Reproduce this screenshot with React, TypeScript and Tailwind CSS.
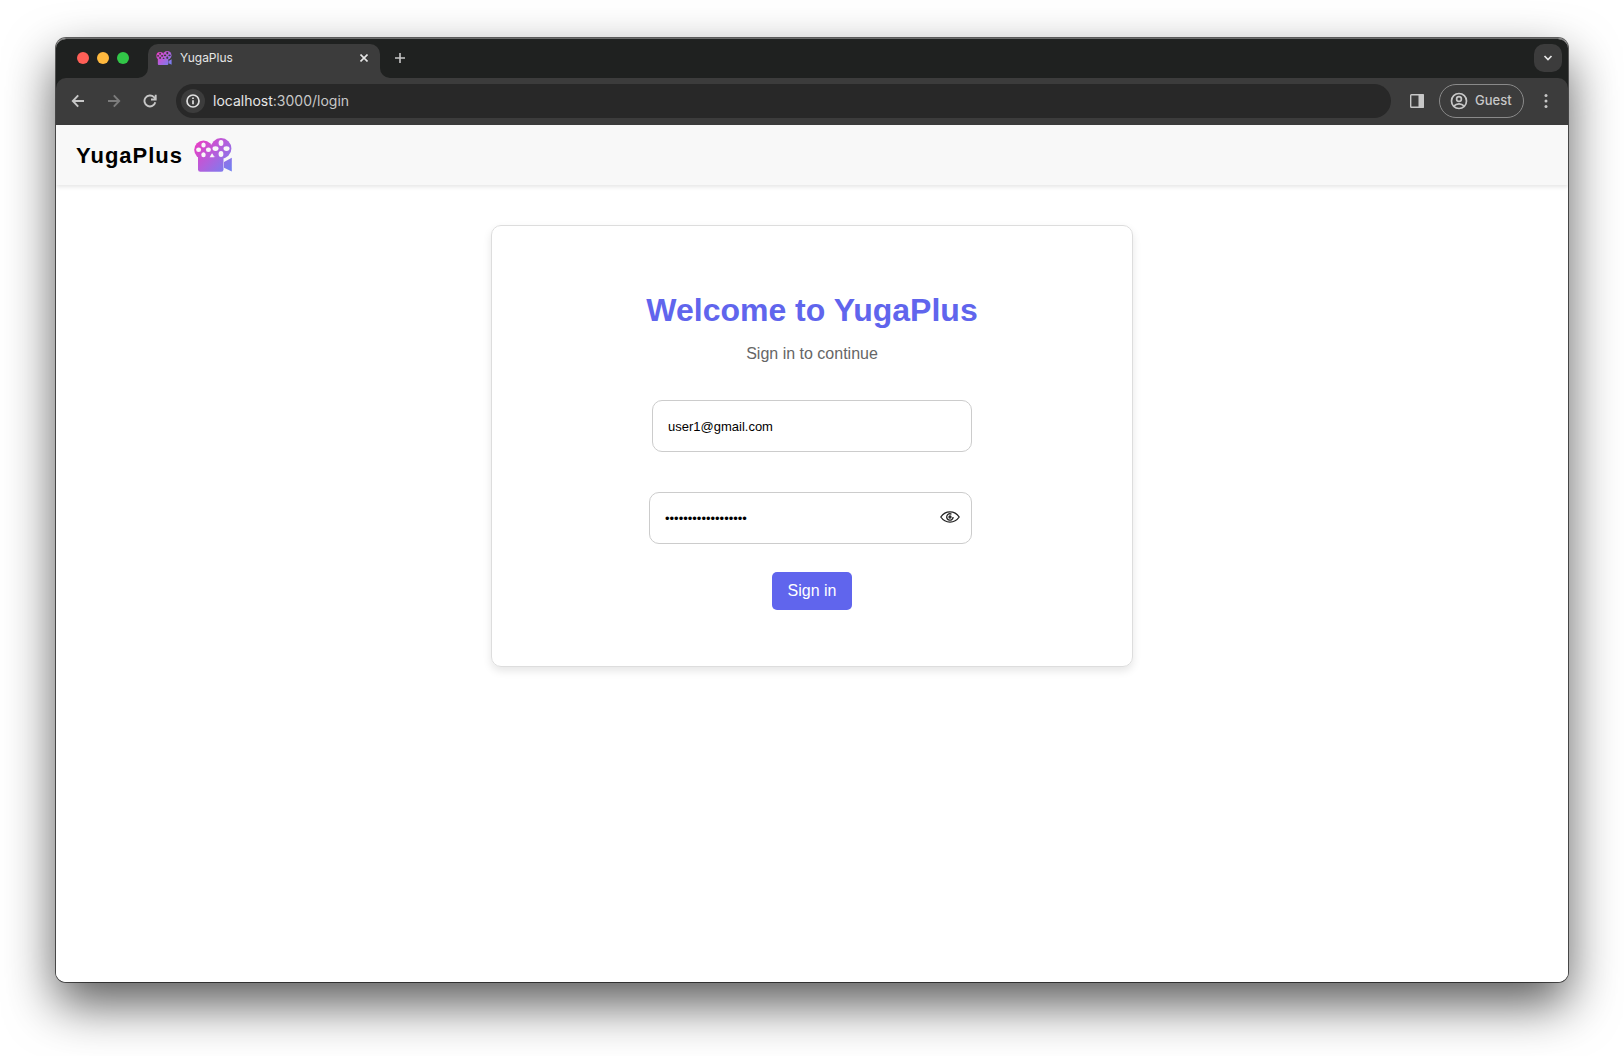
import { useId } from "react";

const reelHoles = (cx: number, cy: number, d: number, rx: number, ry: number) => (
  <>
    <ellipse cx={cx} cy={cy - d} rx={rx} ry={ry} />
    <ellipse cx={cx} cy={cy + d} rx={rx} ry={ry} />
    <ellipse cx={cx - d} cy={cy} rx={ry} ry={rx} />
    <ellipse cx={cx + d} cy={cy} rx={ry} ry={rx} />
  </>
);

function CameraLogo({ className }: { className: string }) {
  const id = useId();
  return (
    <svg viewBox="0 0 38 34" className={className} aria-hidden="true">
      <defs>
        <linearGradient id={id + "g"} gradientUnits="userSpaceOnUse" x1="4" y1="2" x2="36" y2="32">
          <stop offset="0" stopColor="#e83fc4" />
          <stop offset="0.5" stopColor="#b35fdc" />
          <stop offset="1" stopColor="#7480f0" />
        </linearGradient>
        <mask id={id + "m"}>
          <rect width="38" height="34" fill="#fff" />
          <g fill="#000">
            {reelHoles(9.5, 11.8, 4.9, 2.2, 2.5)}
            {reelHoles(27, 10.6, 5.5, 2.4, 3)}
            <path d="M18 16.3l2.4 3h-4.8z" />
          </g>
        </mask>
      </defs>
      <g fill={`url(#${id}g)`} mask={`url(#${id}m)`}>
        <circle cx="9.5" cy="11.8" r="9.3" />
        <circle cx="27" cy="10.5" r="10.4" />
        <path d="M4 18.5h25.5v13a2.3 2.3 0 0 1-2.3 2.3H6.3A2.3 2.3 0 0 1 4 31.5z" />
        <path d="M30 24l7.8-4.2v13.8L30 29.8z" />
      </g>
    </svg>
  );
}

function TabStrip() {
  return (
    <div className="flex h-[39px] items-stretch bg-[#1f2120] pr-[6px] pl-[21px]">
      <div className="flex items-center gap-2 pb-px">
        <button aria-label="Close window" className="size-3 rounded-full bg-[#ff5f57]" />
        <button aria-label="Minimize window" className="size-3 rounded-full bg-[#ffb93e]" />
        <button aria-label="Zoom window" className="size-3 rounded-full bg-[#32c748]" />
      </div>
      <div className="ml-[9px] flex items-end text-[#3c3c3c]">
        <svg viewBox="0 0 10 10" className="size-[10px] fill-current" aria-hidden="true">
          <path d="M10 0v10H0A10 10 0 0 0 10 0z" />
        </svg>
        <div className="flex h-[34px] w-[232px] items-center rounded-t-[10px] bg-[#3c3c3c] pr-[10px] pb-[7px] pl-2 text-[#e6e6e6]">
          <CameraLogo className="h-[14px] w-4" />
          <span className="ml-2 flex-1 font-[Inter] text-[12px]">YugaPlus</span>
          <button aria-label="Close tab" className="grid size-3 place-items-center">
            <svg viewBox="0 0 8 8" className="size-2" fill="none" stroke="currentColor" strokeWidth="1.6" aria-hidden="true">
              <path d="M.5.5l7 7M7.5.5l-7 7" />
            </svg>
          </button>
        </div>
        <svg viewBox="0 0 10 10" className="size-[10px] fill-current" aria-hidden="true">
          <path d="M0 0v10h10A10 10 0 0 1 0 0z" />
        </svg>
      </div>
      <button aria-label="New tab" className="ml-1 pb-px text-[#c7c7c7]">
        <svg viewBox="0 0 12 12" className="size-3" fill="none" stroke="currentColor" strokeWidth="1.6" aria-hidden="true">
          <path d="M6 1v10M1 6h10" />
        </svg>
      </button>
      <button aria-label="Search tabs" className="mt-[5px] ml-auto grid size-7 place-items-center rounded-[10px] bg-[#3c3c3c] text-[#e6e6e6]">
        <svg viewBox="0 0 10 6" className="h-[6px] w-[10px]" fill="none" stroke="currentColor" strokeWidth="1.7" aria-hidden="true">
          <path d="M1.5 1L5 4.500 8.500 1" />
        </svg>
      </button>
    </div>
  );
}

function Toolbar() {
  return (
    <div className="bg-[#1f2120]">
      <div className="flex h-[47px] items-center rounded-t-[10px] bg-[#3c3c3c] pr-5 pb-[2px] pl-[15px] font-[Inter] text-[#c7c7c7]">
        <button aria-label="Back">
          <svg viewBox="0 0 14 14" className="size-[14px]" fill="none" stroke="currentColor" strokeWidth="1.9" aria-hidden="true">
            <path d="M13 7H2M7.200 1.300L1.800 7l5.400 5.700" />
          </svg>
        </button>
        <button aria-label="Forward" disabled className="ml-[22px] text-[#7c7c7c]">
          <svg viewBox="0 0 14 14" className="size-[14px]" fill="none" stroke="currentColor" strokeWidth="1.9" aria-hidden="true">
            <path d="M1 7h11M6.800 1.300L12.200 7l-5.400 5.700" />
          </svg>
        </button>
        <button aria-label="Reload" className="ml-[22px]">
          <svg viewBox="0 0 14 14" className="size-[14px]" fill="none" stroke="currentColor" strokeWidth="1.9" aria-hidden="true">
            <path d="M12.300 8.300A5.500 5.500 0 1 1 11 3.200L12.600 5" />
            <path d="M12.700.8v4.700H8" />
          </svg>
        </button>
        <div className="ml-[19px] flex h-[34px] flex-1 items-center rounded-full bg-[#282828] pl-[5px]">
          <button aria-label="Site information" className="grid size-6 place-items-center rounded-full bg-[#3c3c3c] text-[#e0e0e0]">
            <svg viewBox="0 0 14 14" className="size-[14px]" fill="none" stroke="currentColor" strokeWidth="1.7" aria-hidden="true">
              <circle cx="7" cy="7" r="6" />
              <path d="M7 6.200v4M7 3.600v1.500" />
            </svg>
          </button>
          <a href="#login" className="ml-2 text-[14px] text-[#c7c7c7]">
            <span className="text-[#e6e6e6]">localhost</span>:3000/login
          </a>
        </div>
        <button aria-label="Side panel" className="ml-[19px]">
          <svg viewBox="0 0 14 14" className="size-[14px]" aria-hidden="true">
            <rect x=".7" y=".7" width="12.6" height="12.6" rx=".8" fill="none" stroke="currentColor" strokeWidth="1.4" />
            <path d="M8.500 0H13a1 1 0 0 1 1 1v12a1 1 0 0 1-1 1H8.500z" fill="currentColor" />
          </svg>
        </button>
        <button className="ml-[15px] flex h-[34px] w-[85px] items-center gap-[7px] rounded-full border border-[#8a8a8a] pl-[10px] text-[13px] font-medium">
          <svg viewBox="0 0 18 18" className="size-[18px]" fill="none" stroke="currentColor" strokeWidth="1.7" aria-hidden="true">
            <circle cx="9" cy="9" r="7.5" />
            <circle cx="9" cy="7" r="2.4" />
            <path d="M3.800 14.200c2.900-3 7.500-3 10.400 0" />
          </svg>
          Guest
        </button>
        <button aria-label="Menu" className="ml-[20px]">
          <svg viewBox="0 0 4 14" className="h-[14px] w-1 fill-current" aria-hidden="true">
            <circle cx="2" cy="1.5" r="1.5" />
            <circle cx="2" cy="7" r="1.5" />
            <circle cx="2" cy="12.5" r="1.5" />
          </svg>
        </button>
      </div>
    </div>
  );
}

function LoginCard() {
  return (
    <form
      onSubmit={(e) => e.preventDefault()}
      className="mx-auto mt-10 flex w-full max-w-[642px] flex-col items-center rounded-[10px] border border-[#dddddd] px-5 pt-[65px] pb-14 shadow-[0_4px_8px_rgba(0,0,0,0.1)]"
    >
      <h1 className="text-[32px] leading-[38px] font-bold text-[#6065ed]">Welcome to YugaPlus</h1>
      <p className="mt-[15px] text-base leading-5 text-[#666666]">Sign in to continue</p>
      <input
        aria-label="Email"
        type="email"
        defaultValue="user1@gmail.com"
        className="mt-9 h-[52px] w-80 rounded-[10px] border border-[#cccccc] px-[15px] text-[13px] text-black outline-none"
      />
      <div className="relative mt-10 mr-[3px] w-[323px]">
        <input
          aria-label="Password"
          type="password"
          defaultValue="MyYugaPlusPassword"
          className="block h-[52px] w-full rounded-[10px] border border-[#cccccc] pr-10 pl-[15px] text-[13px] text-black outline-none"
        />
        <button type="button" aria-label="Show password" className="absolute inset-y-0 right-3 flex items-center pb-[2px]">
          <svg viewBox="0 0 20 12" className="h-3 w-5 text-[#222222]" fill="none" stroke="currentColor" strokeWidth="1.3" aria-hidden="true">
            <path d="M.8 6C5.500-.8 14.500-.8 19.200 6 14.500 12.800 5.500 12.800.8 6z" />
            <path d="M11.500 3.200A3.200 3.200 0 1 0 13.100 6" />
            <circle cx="10" cy="6" r="1" />
          </svg>
        </button>
      </div>
      <button type="submit" className="mt-7 h-[38px] rounded-[5px] bg-[#6065ed] px-4 text-base text-white">
        Sign in
      </button>
    </form>
  );
}

export default function App() {
  return (
    <div className="flex min-h-screen flex-col bg-white px-14 pt-[38px] pb-[74px]">
      <div className="flex flex-1 flex-col rounded-[10px] shadow-[0_0_0_1px_rgba(0,0,0,0.6),0_22px_50px_rgba(0,0,0,0.65)]">
        <div className="flex flex-1 flex-col overflow-hidden rounded-[10px] border-t border-[#6b6b6b] bg-white">
          <TabStrip />
          <Toolbar />
          <main className="flex-1 bg-white font-['Liberation_Sans',Arial,sans-serif]">
            <header className="flex h-[60px] items-center gap-[11px] bg-[#f8f8f8] px-5 shadow-[0_2px_4px_rgba(0,0,0,0.1)]">
              <span className="text-[22px] font-bold tracking-[1px] text-black">YugaPlus</span>
              <CameraLogo className="h-[34px] w-[38px]" />
            </header>
            <LoginCard />
          </main>
        </div>
      </div>
    </div>
  );
}
